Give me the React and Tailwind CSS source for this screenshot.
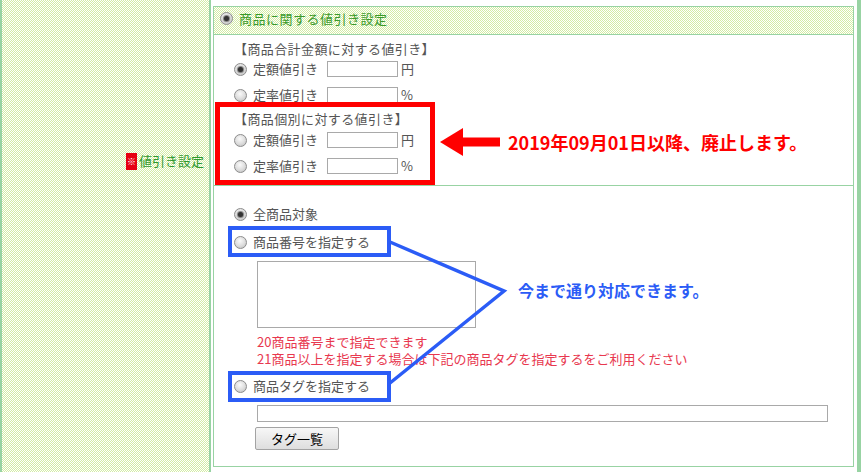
import React from "react";

const checker =
  "bg-[image:repeating-conic-gradient(#d3eca4_0%_25%,#ffffff_0%_50%)] bg-[length:2px_2px]";

const Radio = ({ checked }) => (
  <span className="flex h-[13px] w-[13px] shrink-0 items-center justify-center rounded-full border border-[#8c8c8c] bg-[radial-gradient(circle_at_45%_35%,#fafafa_0%,#dcdcdc_55%,#b9b9b9_100%)]">
    {checked && <span className="h-[5px] w-[5px] rounded-full bg-[#333] shadow-[0_0_1px_1px_#7a7a7a]" />}
  </span>
);

const PriceRow = ({ label, unit, checked, className = "" }) => (
  <div className={`flex h-[20px] items-center ${className}`}>
    <Radio checked={checked} />
    <span className="ml-[6px]">{label}</span>
    <span className="ml-[9px] h-[16px] w-[71px] border border-[#a9a9a9] bg-white" />
    <span className="ml-[3px]">{unit}</span>
  </div>
);

const OptionRow = ({ label, checked, className = "" }) => (
  <div className={`flex h-[20px] items-center ${className}`}>
    <Radio checked={checked} />
    <span className="ml-[6px]">{label}</span>
  </div>
);

export default function App() {
  return (
    <div className="relative flex h-[472px] w-[861px] overflow-hidden bg-white font-['Noto_Sans_CJK_JP','Noto_Sans',sans-serif] text-[13px] text-[#555]">
      <div className="w-[2px] bg-[#98d3a3]" />

      {/* label cell */}
      <div className={`flex w-[207px] justify-end pt-[152px] pr-[5px] ${checker}`}>
        <div className="flex h-[18px] items-center">
          <span className="flex h-[17px] w-[11px] items-center justify-center bg-[#e60012] text-[9px] leading-none text-white">
            ※
          </span>
          <span className="ml-[2px] text-[#2e9a2e]">値引き設定</span>
        </div>
      </div>

      <div className="w-[2px] bg-[#98d3a3]" />

      {/* value cell */}
      <div className="flex-1 pt-[6px] pr-[3px] pl-[2px]">
        <div className="border border-[#98d3a3]">
          <div className={`flex h-[28px] items-center border-b border-[#98d3a3] pb-[4px] pl-[6px] ${checker}`}>
            <Radio checked />
            <span className="ml-[6px] tracking-[0.5px] text-[#3a9a2a]">商品に関する値引き設定</span>
          </div>

          <div className="border-b border-[#98d3a3] pt-[4px] pb-[9px] pl-[20px]">
            <div className="h-[20px] leading-[20px] tracking-[0.4px]">【商品合計金額に対する値引き】</div>
            <PriceRow label="定額値引き" unit="円" checked />
            <PriceRow label="定率値引き" unit="%" className="mt-[6px]" />
            <div className="mt-[4px] h-[20px] leading-[20px] tracking-[0.4px]">【商品個別に対する値引き】</div>
            <PriceRow label="定額値引き" unit="円" className="mt-[1px]" />
            <PriceRow label="定率値引き" unit="%" className="mt-[6px]" />
          </div>

          <div className="pt-[18px] pb-[16px] pl-[20px]">
            <OptionRow label="全商品対象" checked />
            <OptionRow label="商品番号を指定する" className="mt-[8px]" />
            <div className="mt-[9px] ml-[23px] h-[67px] w-[219px] border border-[#a9a9a9] bg-white" />
            <div className="mt-[5px] ml-[23px] leading-[17px] text-[#e8384f]">
              <div>20商品番号まで指定できます</div>
              <div>21商品以上を指定する場合は下記の商品タグを指定するをご利用ください</div>
            </div>
            <OptionRow label="商品タグを指定する" className="mt-[9px]" />
            <div className="mt-[9px] ml-[23px] h-[17px] w-[571px] border border-[#a9a9a9] bg-white" />
            <button className="mt-[5px] ml-[21px] flex h-[23px] w-[84px] items-center justify-center rounded-[2px] border border-[#a3a3a3] bg-[linear-gradient(#f7f7f7,#dedede)] text-[13px] text-black">
              タグ一覧
            </button>
          </div>
        </div>
      </div>

      <div className="w-[4px] bg-[#98d3a3]" />

      {/* annotations */}
      <div className="absolute top-[102px] left-[215px] h-[83px] w-[220px] border-[5px] border-[#ff0000]" />
      <svg className="absolute top-[128px] left-[440px]" width="60" height="28" viewBox="0 0 60 28">
        <polygon points="0,14 23,0 23,28" fill="#ff0000" />
        <rect x="22" y="9.5" width="38" height="9" fill="#ff0000" />
      </svg>
      <div className="absolute top-[131px] left-[508px] text-[18px] leading-[22px] font-bold text-[#ff0000]">
        2019年09月01日以降、廃止します。
      </div>

      <div className="absolute top-[226px] left-[228px] h-[31px] w-[163px] border-[4px] border-[#2b5cf6]" />
      <div className="absolute top-[371px] left-[228px] h-[31px] w-[163px] border-[4px] border-[#2b5cf6]" />
      <svg className="pointer-events-none absolute top-0 left-0" width="861" height="472">
        <polyline points="390,242 504,291 390,383" fill="none" stroke="#2b5cf6" strokeWidth="3.5" />
      </svg>
      <div className="absolute top-[280px] left-[518px] text-[16px] leading-[20px] font-bold text-[#2b5cf6]">
        今まで通り対応できます。
      </div>
    </div>
  );
}
